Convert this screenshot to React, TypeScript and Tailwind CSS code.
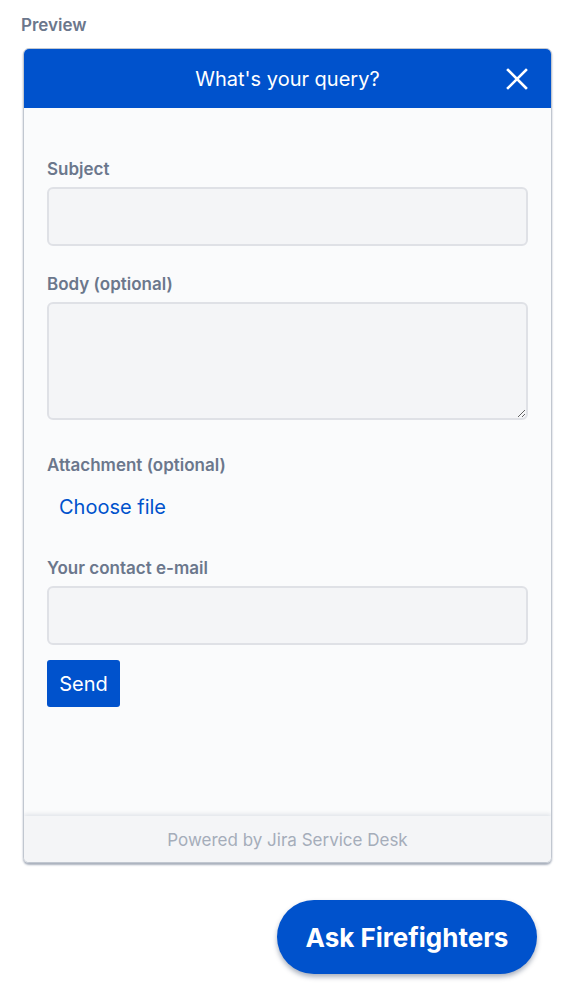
import { useState } from 'react'

const font = { fontFamily: 'Inter, "Liberation Sans", sans-serif' }

function Field({ label, tall }: { label: string; tall?: boolean }) {
  return (
    <div className="flex flex-col">
      <label className="text-[17px] font-semibold leading-[22px] text-[#6b778c]">{label}</label>
      {tall ? (
        <textarea className="mt-[7px] block h-[118px] w-full resize rounded-[6px] border-2 border-[#dfe1e6] bg-[#f4f5f7] outline-none" />
      ) : (
        <input className="mt-[7px] block h-[59px] w-full rounded-[6px] border-2 border-[#dfe1e6] bg-[#f4f5f7] outline-none" />
      )}
    </div>
  )
}

export default function App() {
  const [open, setOpen] = useState(true)

  return (
    <div className="min-h-[999px] bg-white px-[23px] pt-[14px]" style={font}>
      {/* preview label */}
      <div className="ml-[-2px] text-[17px] font-semibold leading-[22px] text-[#6b778c]">Preview</div>

      {/* widget */}
      <div
        className={`mt-[12px] flex h-[815px] w-[529px] flex-col overflow-hidden rounded-[6px] border border-[#c1c7d0] shadow-[0_2px_2px_rgba(9,30,66,0.35)] ${open ? '' : 'opacity-60'}`}
      >
        <div className="relative flex h-[59px] shrink-0 items-center justify-center bg-[#0052cc] text-[20px] text-white">
          What's your query?
          <button onClick={() => setOpen(!open)} className="absolute right-[23px] top-[19px] flex h-[22px] w-[22px] items-center justify-center">
            <svg width="22" height="22" viewBox="0 0 22 22" fill="none" stroke="white" strokeWidth="2.6" strokeLinecap="square">
              <path d="M2 2L20 20M20 2L2 20" />
            </svg>
          </button>
        </div>

        <div className="flex flex-1 flex-col bg-[#fafbfc] px-[23px] pt-[50px]">
          <Field label="Subject" />
          <div className="mt-[27px]">
            <Field label="Body (optional)" tall />
          </div>
          <div className="mt-[34px] text-[17px] font-semibold leading-[22px] text-[#6b778c]">Attachment (optional)</div>
          <div className="ml-[12px] mt-[19px] text-[20px] leading-[24px] text-[#0052cc]">Choose file</div>
          <div className="mt-[38px]">
            <Field label="Your contact e-mail" />
          </div>
          <button className="mt-[15px] h-[47px] w-[73px] rounded-[3px] bg-[#0052cc] text-[20px] text-white">Send</button>
        </div>

        <div className="flex h-[46px] shrink-0 items-center justify-center bg-[#f4f5f7] pt-[4px] text-[17px] text-[#a5adba] shadow-[0_-2px_4px_rgba(9,30,66,0.1)]">
          Powered by Jira Service Desk
        </div>
      </div>

      <div className="mt-[37px] flex w-[529px] justify-end pr-[15px]">
        <button className="h-[74px] w-[260px] rounded-full bg-[#0052cc] text-[26px] font-bold text-white shadow-[0_3px_5px_rgba(9,30,66,0.35)]">
          Ask Firefighters
        </button>
      </div>
    </div>
  )
}
